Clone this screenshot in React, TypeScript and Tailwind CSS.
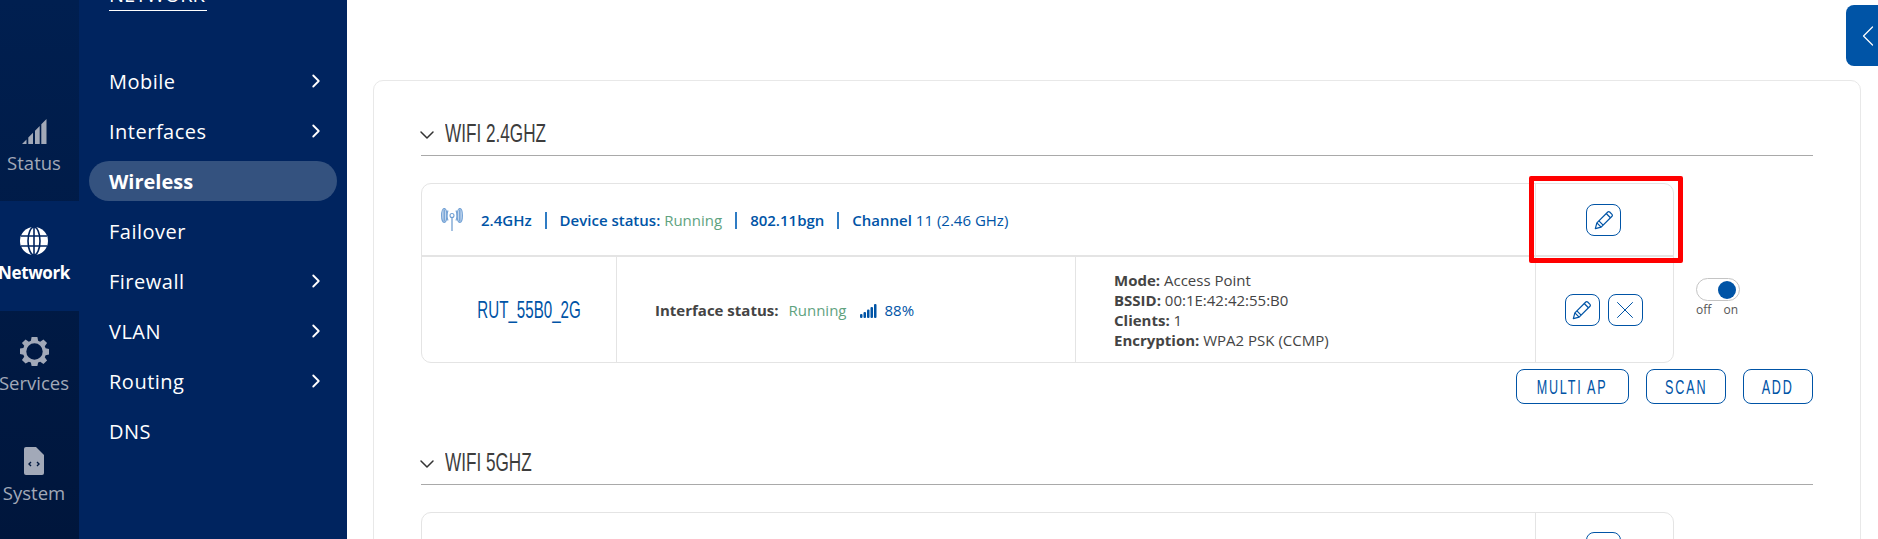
import { ChevronDown, ChevronLeft, ChevronRight, X } from "lucide-react";

const menu = [
  { label: "Mobile", arrow: true },
  { label: "Interfaces", arrow: true },
  { label: "Wireless", active: true },
  { label: "Failover" },
  { label: "Firewall", arrow: true },
  { label: "VLAN", arrow: true },
  { label: "Routing", arrow: true },
  { label: "DNS" },
];

function SignalIcon() {
  return (
    <svg width="25" height="25" viewBox="0 0 25 25" fill="#a2a9b8">
      <path d="M0 25 L4.5 20.5 V25 Z M6.3 25 V18.6 L11 13.8 V25 Z M13 25 V11.7 L17.7 6.9 V25 Z M19.3 25 V5.3 L24.5 0 V25 Z" />
    </svg>
  );
}

function GlobeIcon() {
  return (
    <svg width="28" height="28" viewBox="0 0 28 28" fill="none" stroke="#00245f" strokeWidth="1.6">
      <circle cx="14" cy="14" r="14" fill="#ffffff" stroke="none" />
      <ellipse cx="14" cy="14" rx="6" ry="14" />
      <path d="M14 0V28M1 9H27M1 19H27" />
    </svg>
  );
}

function GearIcon() {
  return (
    <svg width="29" height="29" viewBox="0 0 24 24" fill="#a2a9b8">
      <path
        fillRule="evenodd"
        d="M9.6 0h4.8l.6 3.2 1.7.7L19.4 2l3 3-1.9 2.7.7 1.7 2.8.6v4.4l-2.8.6-.7 1.7 1.9 2.7-3 3-2.7-1.9-1.7.7-.6 2.8H9.6l-.6-2.8-1.7-.7L4.6 22l-3-3 1.9-2.7-.7-1.7L0 14V9.6l2.8-.6.7-1.7L1.6 5l3-3 2.7 1.9L9 3.2zM12 5.2a6.8 6.8 0 1 0 0 13.6 6.8 6.8 0 0 0 0-13.6z"
      />
    </svg>
  );
}

function FileIcon() {
  return (
    <svg width="20" height="28" viewBox="0 0 20 28">
      <path d="M2 0H12L20 8V26a2 2 0 0 1-2 2H2a2 2 0 0 1-2-2V2a2 2 0 0 1 2-2Z" fill="#a2a9b8" />
      <path d="M7 15l-2 2 2 2M13 15l2 2-2 2" fill="none" stroke="#00183f" strokeWidth="1.4" />
    </svg>
  );
}

function AntennaIcon() {
  return (
    <svg width="22" height="23" viewBox="0 0 22 23" fill="none" stroke="#6f9fd4" strokeWidth="1.1" className="shrink-0">
      <circle cx="11" cy="7.5" r="2" />
      <path d="M11 9.5V23" stroke="#5b8fc9" />
      <ellipse cx="3.2" cy="7.5" rx="2.6" ry="7" fill="#c5d8ee" />
      <ellipse cx="18.8" cy="7.5" rx="2.6" ry="7" fill="#c5d8ee" />
      <path d="M3.2 1.5v12M18.8 1.5v12" stroke="#6f9fd4" strokeWidth="1.3" />
      <path d="M7 2.5c-1.2 3-1.2 7 0 10M15 2.5c1.2 3 1.2 7 0 10" />
    </svg>
  );
}

function PencilIcon() {
  return (
    <svg width="20" height="20" viewBox="0 0 18 18" fill="none" stroke="#0054a6" strokeWidth="1.1" strokeLinejoin="round">
      <path d="M1.2 16.8 2.6 11.6 12.4 1.8a1.2 1.2 0 0 1 1.7 0l2.1 2.1a1.2 1.2 0 0 1 0 1.7L6.4 15.4Z" />
      <path d="M2.6 11.6l3.8 3.8M4.4 9.8l3.8 3.8M11 3.2l3.8 3.8" />
    </svg>
  );
}

function SignalBars() {
  return (
    <svg width="17" height="14" viewBox="0 0 17 14" fill="#0054a6">
      <rect x="0" y="10" width="2.5" height="4" rx="1" />
      <rect x="3.5" y="8" width="2.5" height="6" rx="1" />
      <rect x="7" y="5.5" width="2.5" height="8.5" rx="1" />
      <rect x="10.5" y="3" width="2.5" height="11" rx="1" />
      <rect x="14" y="0" width="2.5" height="14" rx="1" />
    </svg>
  );
}

function RailItem({ icon, label, active }: { icon: React.ReactNode; label: string; active?: boolean }) {
  return (
    <div
      className={`flex h-[110px] flex-col items-center justify-end pb-[26px] pr-[11px] ${active ? "bg-[#00245f]" : ""}`}
    >
      <div className="flex h-[30px] items-center">{icon}</div>
      <span
        className={`mt-[5px] whitespace-nowrap leading-[24px] ${
          active ? "text-[17px] font-bold tracking-[-0.4px] text-white" : "text-[18.5px] text-[#a2a9b8]"
        }`}
      >
        {label}
      </span>
    </div>
  );
}

function IconButton({ children }: { children: React.ReactNode }) {
  return (
    <button className="flex h-[32px] w-[35px] items-center justify-center rounded-[8px] border border-[#0054a6]">
      {children}
    </button>
  );
}

function TextButton({ label, width }: { label: string; width: string }) {
  return (
    <button
      className={`flex h-[35px] ${width} items-center justify-center rounded-[8px] border border-[#0054a6] font-['Liberation_Sans',sans-serif] text-[21px] tracking-[3px] text-[#0054a6]`}
    >
      <span className="inline-block shrink-0 scale-x-[0.6] whitespace-nowrap">{label}</span>
    </button>
  );
}

function SectionTitle({ title }: { title: string }) {
  return (
    <div className="flex h-[45px] items-center border-b border-[#a9a9a9]">
      <ChevronDown size={24} strokeWidth={1.5} className="-ml-[6px] mt-[3px] text-[#333]" />
      <h2 className="ml-[6px] inline-block origin-left scale-x-[0.66] whitespace-nowrap font-['Liberation_Sans',sans-serif] text-[26px] leading-[32px] text-[#3d3d3d]">
        {title}
      </h2>
    </div>
  );
}

export default function App() {
  return (
    <div className="relative flex h-[539px] w-[1878px] overflow-hidden bg-white font-['Open_Sans',sans-serif]">
      {/* left rail */}
      <aside className="h-full w-[79px] shrink-0 bg-gradient-to-b from-[#001f50] to-[#00163c] pt-[91px]">
        <RailItem icon={<SignalIcon />} label="Status" />
        <RailItem icon={<GlobeIcon />} label="Network" active />
        <RailItem icon={<GearIcon />} label="Services" />
        <RailItem icon={<FileIcon />} label="System" />
      </aside>

      {/* submenu */}
      <nav className="h-full w-[268px] shrink-0 bg-[#00245f] px-[10px]">
        <div className="ml-[20px] flow-root h-[11px] w-[98px] border-b border-white">
          <div className="-mt-[18px] whitespace-nowrap text-[20px] leading-[26px] text-white">NETWORK</div>
        </div>
        <ul className="mt-[45px]">
          {menu.map((item) => (
            <li key={item.label} className="flex h-[50px] items-center">
              <div
                className={`flex h-[40px] w-full items-center justify-between rounded-[20px] pl-[20px] pr-[10px] text-[20px] text-white ${
                  item.active ? "bg-[#34527f] font-bold" : "tracking-[0.5px]"
                }`}
              >
                <span className="pt-[2px]">{item.label}</span>
                {item.arrow && <ChevronRight size={22} strokeWidth={2} />}
              </div>
            </li>
          ))}
        </ul>
      </nav>

      {/* content */}
      <main className="min-w-0 flex-1 pl-[26px] pr-[17px] pt-[80px]">
        <div className="h-[600px] rounded-[10px] border border-[#e8e8e8] px-[47px] pt-[30px]">
          <SectionTitle title="WIFI 2.4GHZ" />

          <div className="mt-[27px] flex items-start">
            <div className="w-[1253px] shrink-0 rounded-[10px] border border-[#e4e4e4]">
              <div className="flex h-[73px] border-b-2 border-[#e4e4e4]">
                <div className="flex w-[1113px] items-center gap-[18px] pl-[19px] text-[15px] font-semibold text-[#0054a6]">
                  <AntennaIcon />
                  <div className="flex items-center gap-[13px] pt-[2px]">
                    <span>2.4GHz</span>
                    <span className="h-[17px] w-[2px] bg-[#2f7cc4]" />
                    <span>
                      Device status: <span className="font-normal text-[#5fa37f]">Running</span>
                    </span>
                    <span className="h-[17px] w-[2px] bg-[#2f7cc4]" />
                    <span>802.11bgn</span>
                    <span className="h-[17px] w-[2px] bg-[#2f7cc4]" />
                    <span>
                      Channel <span className="font-normal">11 (2.46 GHz)</span>
                    </span>
                  </div>
                </div>
                <div className="flex flex-1 items-center justify-center border-l border-[#e4e4e4] pr-[2px]">
                  <IconButton>
                    <PencilIcon />
                  </IconButton>
                </div>
              </div>
              <div className="flex h-[105px] text-[15px] text-[#444]">
                <div className="flex w-[195px] items-center justify-center border-r border-[#e4e4e4] pl-[21px] font-['Liberation_Sans',sans-serif] text-[24px] text-[#0054a6]">
                  <span className="inline-block shrink-0 scale-x-[0.63] whitespace-nowrap">RUT_55B0_2G</span>
                </div>
                <div className="flex w-[459px] items-center border-r border-[#e4e4e4] pl-[38px] pt-[2px]">
                  <span className="font-bold">Interface status:</span>
                  <span className="ml-[10px] text-[#5fa37f]">Running</span>
                  <span className="ml-[14px] mr-[7px]">
                    <SignalBars />
                  </span>
                  <span className="text-[#0054a6]">88%</span>
                </div>
                <div className="flex w-[460px] flex-col justify-center border-r border-[#e4e4e4] pl-[38px] leading-[20px]">
                  <div>
                    <b>Mode:</b> Access Point
                  </div>
                  <div>
                    <b>BSSID:</b> 00:1E:42:42:55:B0
                  </div>
                  <div>
                    <b>Clients:</b> 1
                  </div>
                  <div>
                    <b>Encryption:</b> WPA2 PSK (CCMP)
                  </div>
                </div>
                <div className="flex flex-1 items-center justify-center gap-[8px] pr-[2px]">
                  <IconButton>
                    <PencilIcon />
                  </IconButton>
                  <IconButton>
                    <X size={30} strokeWidth={0.8} className="shrink-0 text-[#0054a6]" />
                  </IconButton>
                </div>
              </div>
            </div>

            {/* on/off toggle */}
            <div className="ml-[22px] mt-[95px] w-[45px]">
              <div className="flex h-[23px] w-[44px] items-center justify-end rounded-full border border-[#c4c4c4] pr-[3px]">
                <div className="h-[18px] w-[18px] rounded-full bg-[#0054a6]" />
              </div>
              <div className="mt-[1px] flex justify-between text-[12px] leading-[16px] text-[#555]">
                <span>off</span>
                <span className="pr-[3px]">on</span>
              </div>
            </div>
          </div>

          <div className="mt-[6px] flex justify-end gap-[17px]">
            <TextButton label="MULTI AP" width="w-[113px]" />
            <TextButton label="SCAN" width="w-[80px]" />
            <TextButton label="ADD" width="w-[70px]" />
          </div>

          <div className="mt-[36px]">
            <SectionTitle title="WIFI 5GHZ" />
          </div>

          <div className="mt-[27px] w-[1253px] rounded-[10px] border border-[#e4e4e4]">
            <div className="flex h-[73px]">
              <div className="w-[1113px]" />
              <div className="flex flex-1 justify-center border-l border-[#e4e4e4] pr-[2px] pt-[19px]">
                <IconButton>
                  <PencilIcon />
                </IconButton>
              </div>
            </div>
          </div>
        </div>
      </main>

      {/* collapse tab */}
      <div className="absolute right-0 top-[5px] flex h-[61px] w-[32px] items-center justify-end rounded-l-[8px] bg-[#0054a6]">
        <ChevronLeft size={36} strokeWidth={0.8} className="-mr-[8px] shrink-0 text-white" />
      </div>

      {/* highlight */}
      <div className="absolute left-[1529px] top-[176px] h-[87px] w-[154px] rounded-[2px] border-[5px] border-[#ff0000]" />
    </div>
  );
}
